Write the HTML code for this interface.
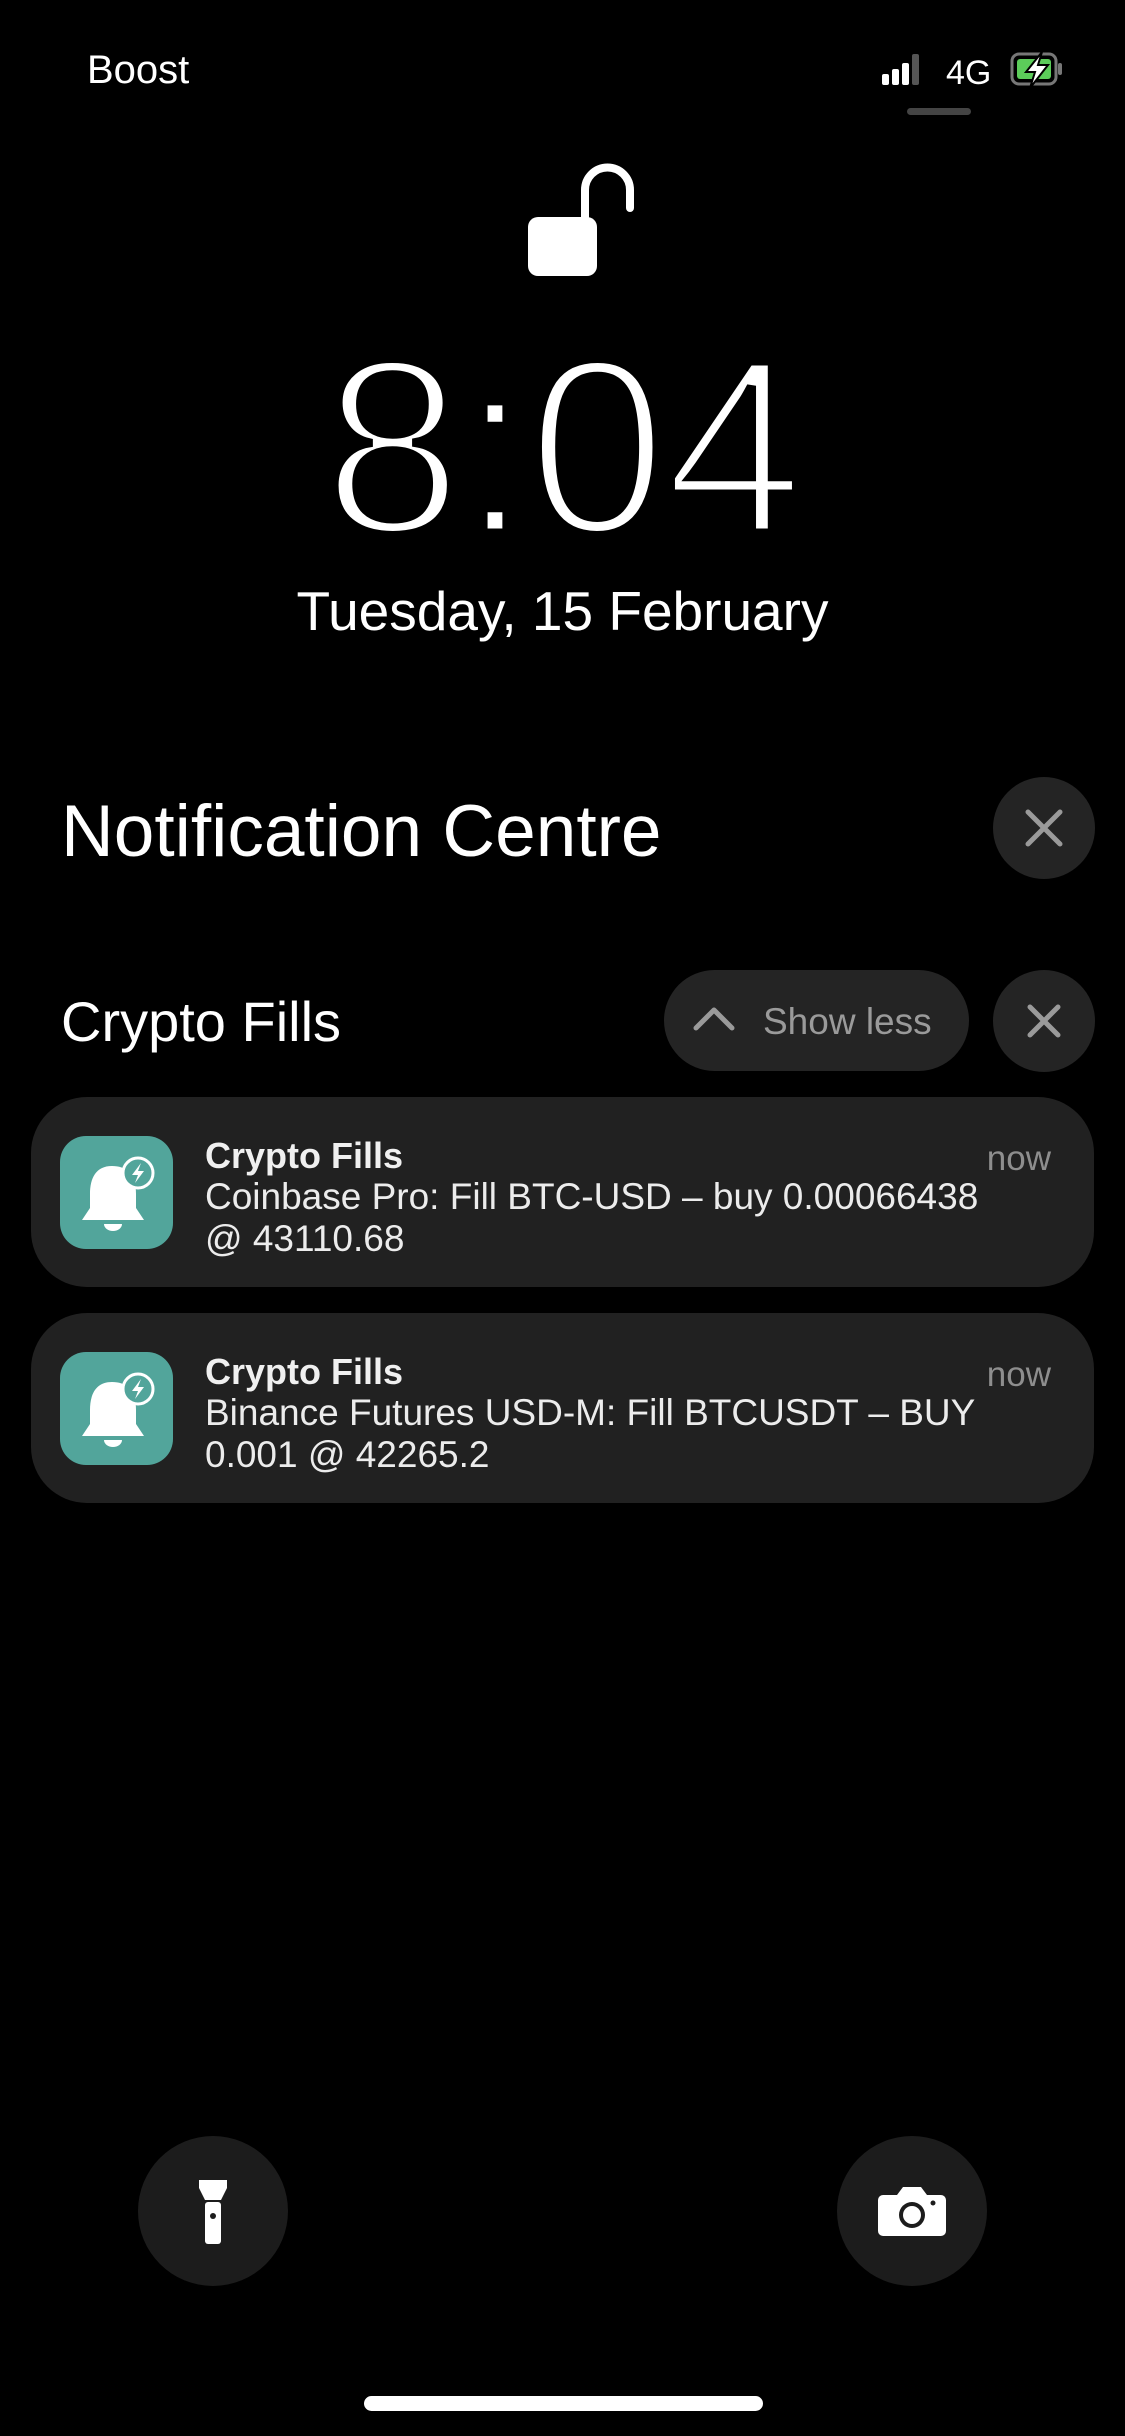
<!DOCTYPE html>
<html><head><meta charset="utf-8"><style>
*{margin:0;padding:0;box-sizing:border-box}
body{width:1125px;height:2436px;background:#000;position:relative;overflow:hidden;font-family:"Liberation Sans",sans-serif;color:#fff}
.a{position:absolute}
.t{white-space:nowrap;line-height:1}
.circ{position:absolute;border-radius:50%;background:#242424}
.card{position:absolute;left:31px;width:1063px;height:190px;border-radius:56px;background:#212121}
.icon{position:absolute;left:29px;top:39px;width:113px;height:113px;border-radius:26px;background:#52a59b}
.ttl{position:absolute;left:174px;top:38px;font-size:36px;font-weight:bold;color:#f0f0f0}
.now{position:absolute;right:43px;top:42px;font-size:35px;color:#8e8e8e}
.body{position:absolute;left:174px;top:79px;font-size:37px;line-height:42px;color:#ececec;white-space:nowrap}
</style></head><body>
<div class="a t" style="left:87px;top:50px;font-size:40px">Boost</div>
<svg class="a" style="left:880px;top:50px" width="240" height="65" viewBox="880 50 240 65">
<rect x="882" y="74" width="7" height="11" rx="2" fill="#fff"/>
<rect x="892" y="69" width="7" height="16" rx="2" fill="#fff"/>
<rect x="902" y="63" width="7" height="22" rx="2" fill="#fff"/>
<rect x="912" y="54" width="7" height="31" rx="2" fill="#555"/>
<text x="946" y="84" font-family="Liberation Sans" font-size="34" fill="#fff">4G</text>
<rect x="1012" y="54" width="44" height="30" rx="7" fill="none" stroke="#777" stroke-width="3"/>
<rect x="1017" y="59" width="34" height="20" rx="3" fill="#5ccc5a"/>
<rect x="1058" y="63" width="4" height="12" rx="2" fill="#777"/>
<path d="M1042 52 L1026 72 L1035 72 L1030 88 L1048 65 L1038 65 Z" fill="#fff" stroke="#000" stroke-width="2"/>
<rect x="907" y="108" width="64" height="7" rx="3.5" fill="#444"/>
</svg>
<svg class="a" style="left:520px;top:155px" width="125" height="125" viewBox="520 155 125 125">
<path d="M585 217 V190 a22.5 22.5 0 0 1 45 0 V208" fill="none" stroke="#fff" stroke-width="8" stroke-linecap="round"/>
<rect x="528" y="217" width="69" height="59" rx="10" fill="#fff"/>
</svg>
<div class="a t" style="left:0;width:1125px;text-align:center;top:322px;font-family:'Liberation Sans',sans-serif;font-size:250px;-webkit-text-stroke:9px #000;letter-spacing:-2px">8:04</div>
<div class="a t" style="left:0;width:1125px;text-align:center;top:584px;font-size:55px">Tuesday, 15 February</div>
<div class="a t" style="left:61px;top:795px;font-size:73px">Notification Centre</div>
<div class="circ" style="left:993px;top:777px;width:102px;height:102px"></div>
<svg class="a" style="left:1024px;top:808px" width="40" height="40"><path d="M4 4 L36 36 M36 4 L4 36" stroke="#9a9a9a" stroke-width="5" stroke-linecap="round"/></svg>
<div class="a t" style="left:61px;top:994px;font-size:56px">Crypto Fills</div>
<div class="a" style="left:664px;top:970px;width:305px;height:101px;border-radius:51px;background:#242424"></div>
<svg class="a" style="left:692px;top:1004px" width="44" height="30"><path d="M4 24 L22 6 L40 24" fill="none" stroke="#9a9a9a" stroke-width="5" stroke-linecap="round" stroke-linejoin="round"/></svg>
<div class="a t" style="left:763px;top:1003px;font-size:37px;color:#9a9a9a">Show less</div>
<div class="circ" style="left:993px;top:970px;width:102px;height:102px"></div>
<svg class="a" style="left:1026px;top:1003px" width="36" height="36"><path d="M4 4 L32 32 M32 4 L4 32" stroke="#9a9a9a" stroke-width="5" stroke-linecap="round"/></svg>

<div class="card" style="top:1097px">
<div class="icon"><svg width="113" height="113" viewBox="0 0 113 113">
<path d="M52 30 c-16 0 -22 12 -22 28 v14 l-8 12 h62 l-8 -12 v-14 c0 -16 -6 -28 -24 -28 z" fill="#fff"/>
<path d="M44 88 h18 a9 7 0 0 1 -18 0 z" fill="#fff"/>
<circle cx="78" cy="37" r="15" fill="#52a59b" stroke="#fff" stroke-width="3"/>
<path d="M81 27 L72 39 L78 39 L75 47 L84 35 L78 35 Z" fill="#fff"/>
</svg></div>
<div class="ttl">Crypto Fills</div><div class="now">now</div>
<div class="body">Coinbase Pro: Fill BTC-USD – buy 0.00066438<br>@ 43110.68</div>
</div>
<div class="card" style="top:1313px">
<div class="icon"><svg width="113" height="113" viewBox="0 0 113 113">
<path d="M52 30 c-16 0 -22 12 -22 28 v14 l-8 12 h62 l-8 -12 v-14 c0 -16 -6 -28 -24 -28 z" fill="#fff"/>
<path d="M44 88 h18 a9 7 0 0 1 -18 0 z" fill="#fff"/>
<circle cx="78" cy="37" r="15" fill="#52a59b" stroke="#fff" stroke-width="3"/>
<path d="M81 27 L72 39 L78 39 L75 47 L84 35 L78 35 Z" fill="#fff"/>
</svg></div>
<div class="ttl">Crypto Fills</div><div class="now">now</div>
<div class="body">Binance Futures USD-M: Fill BTCUSDT – BUY<br>0.001 @ 42265.2</div>
</div>

<div class="circ" style="left:138px;top:2136px;width:150px;height:150px;background:#1c1c1c"></div>
<svg class="a" style="left:193px;top:2176px" width="40" height="72" viewBox="0 0 40 72">
<path d="M6 4 h28 v8 l-6 12 h-16 l-6 -12 z" fill="#fff"/>
<rect x="12" y="26" width="16" height="42" rx="3" fill="#fff"/>
<circle cx="20" cy="40" r="3" fill="#1c1c1c"/>
</svg>
<div class="circ" style="left:837px;top:2136px;width:150px;height:150px;background:#1c1c1c"></div>
<svg class="a" style="left:877px;top:2183px" width="70" height="56" viewBox="0 0 70 56">
<path d="M6 12 h14 l6 -8 h18 l6 8 h14 a5 5 0 0 1 5 5 v31 a5 5 0 0 1 -5 5 h-58 a5 5 0 0 1 -5 -5 v-31 a5 5 0 0 1 5 -5 z" fill="#fff"/>
<circle cx="35" cy="32" r="13" fill="#1c1c1c"/><circle cx="35" cy="32" r="9" fill="#fff"/>
<circle cx="56" cy="20" r="2.5" fill="#1c1c1c"/>
</svg>
<div class="a" style="left:364px;top:2396px;width:399px;height:15px;border-radius:8px;background:#fff"></div>
</body></html>
